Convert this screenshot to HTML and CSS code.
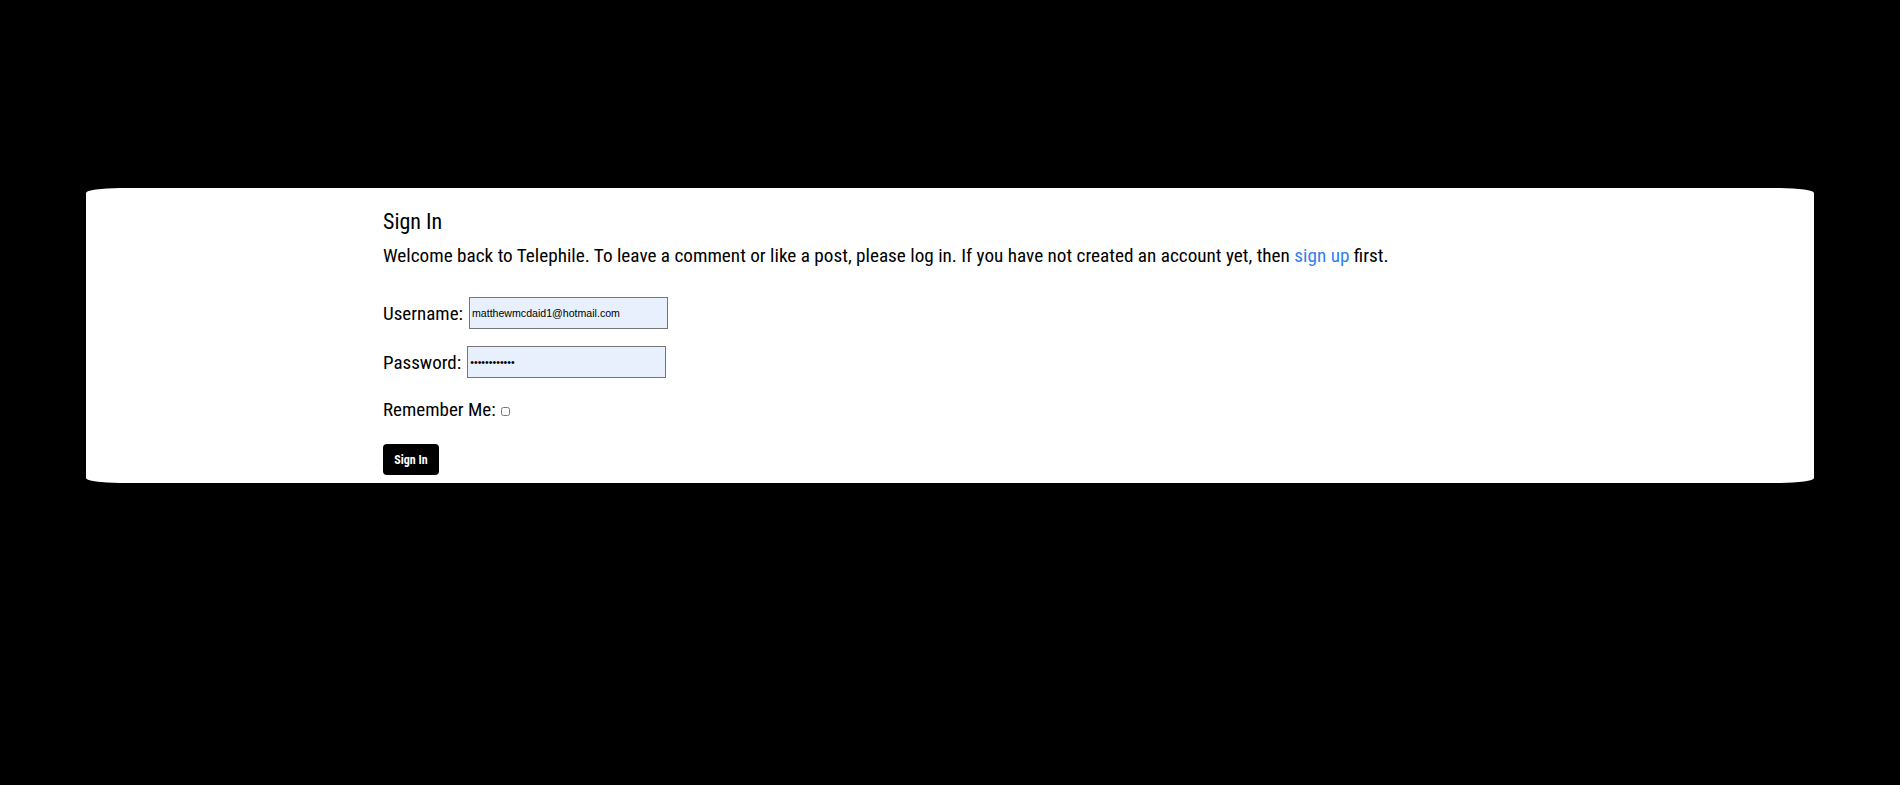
FILE: index.html
```html
<!DOCTYPE html>
<html lang="en">
<head>
<meta charset="utf-8">
<title>Sign In - Telephile</title>
<link rel="stylesheet" href="styles.css">
</head>
<body>
<main class="card">
  <h2 class="title">Sign In</h2>
  <p class="intro">Welcome back to Telephile. To leave a comment or like a post, please log in. If you have not created an account yet, then <a href="#" class="link">sign up</a> first.</p>
  <form class="form">
    <div class="row">
      <label class="label" for="u">Username:</label>
      <input class="field field-user" id="u" type="text" value="matthewmcdaid1@hotmail.com">
    </div>
    <div class="row">
      <label class="label" for="p">Password:</label>
      <input class="field field-pass" id="p" type="password" value="............">
    </div>
    <div class="row row-check">
      <label class="label" for="r">Remember Me:</label>
      <input class="check" id="r" type="checkbox">
    </div>
    <button class="btn" type="button">Sign In</button>
  </form>
</main>
</body>
</html>
```

FILE: styles.css
```css
html, body {
  margin: 0;
  padding: 0;
  background: #000;
}
body {
  font-family: "Roboto Condensed", Roboto, "Liberation Sans", sans-serif;
  font-stretch: condensed;
  color: #000;
}
.card {
  margin: 188px 86px 0;
  height: 295px;
  box-sizing: border-box;
  background: #fff;
  border-radius: 34px / 5px;
  padding: 21px 0 0 297px;
}
.title {
  margin: 0;
  font-size: 22px;
  font-weight: 400;
  line-height: 26px;
}
.intro {
  margin: 7px 0 0;
  font-size: 19.2px;
  line-height: 27px;
}
.link {
  color: #2f7ff0;
  text-decoration: none;
}
.form {
  display: flex;
  flex-direction: column;
  align-items: flex-start;
  margin-top: 28px;
}
.row {
  display: flex;
  align-items: center;
  gap: 5px;
  font-size: 19px;
  line-height: 27px;
  height: 32px;
  margin-bottom: 17px;
}
.row-check {
  height: 27px;
  gap: 5px;
  margin-top: 1px;
  margin-bottom: 21px;
}
.label {
  white-space: nowrap;
}
.field {
  box-sizing: border-box;
  height: 32px;
  width: 199px;
  margin: 0;
  padding: 1px 2px;
  border: 1px solid #767676;
  background: #e8f0fe;
  font-family: "Liberation Sans", Arial, sans-serif;
  font-stretch: normal;
  font-size: 10.6px;
  color: #000;
  outline: none;
}
.field-user {
  margin-left: 1px;
}
.field-pass {
  margin-left: 1px;
}
.check {
  width: 9px;
  height: 9px;
  margin: 3px 0 0 0;
}
.btn {
  width: 56px;
  height: 31px;
  border: none;
  border-radius: 4px;
  background: #000;
  color: #fff;
  font-family: "Roboto Condensed", Roboto, "Liberation Sans", sans-serif;
  font-stretch: condensed;
  font-weight: 700;
  font-size: 12px;
  padding: 0;
  cursor: pointer;
}
```
